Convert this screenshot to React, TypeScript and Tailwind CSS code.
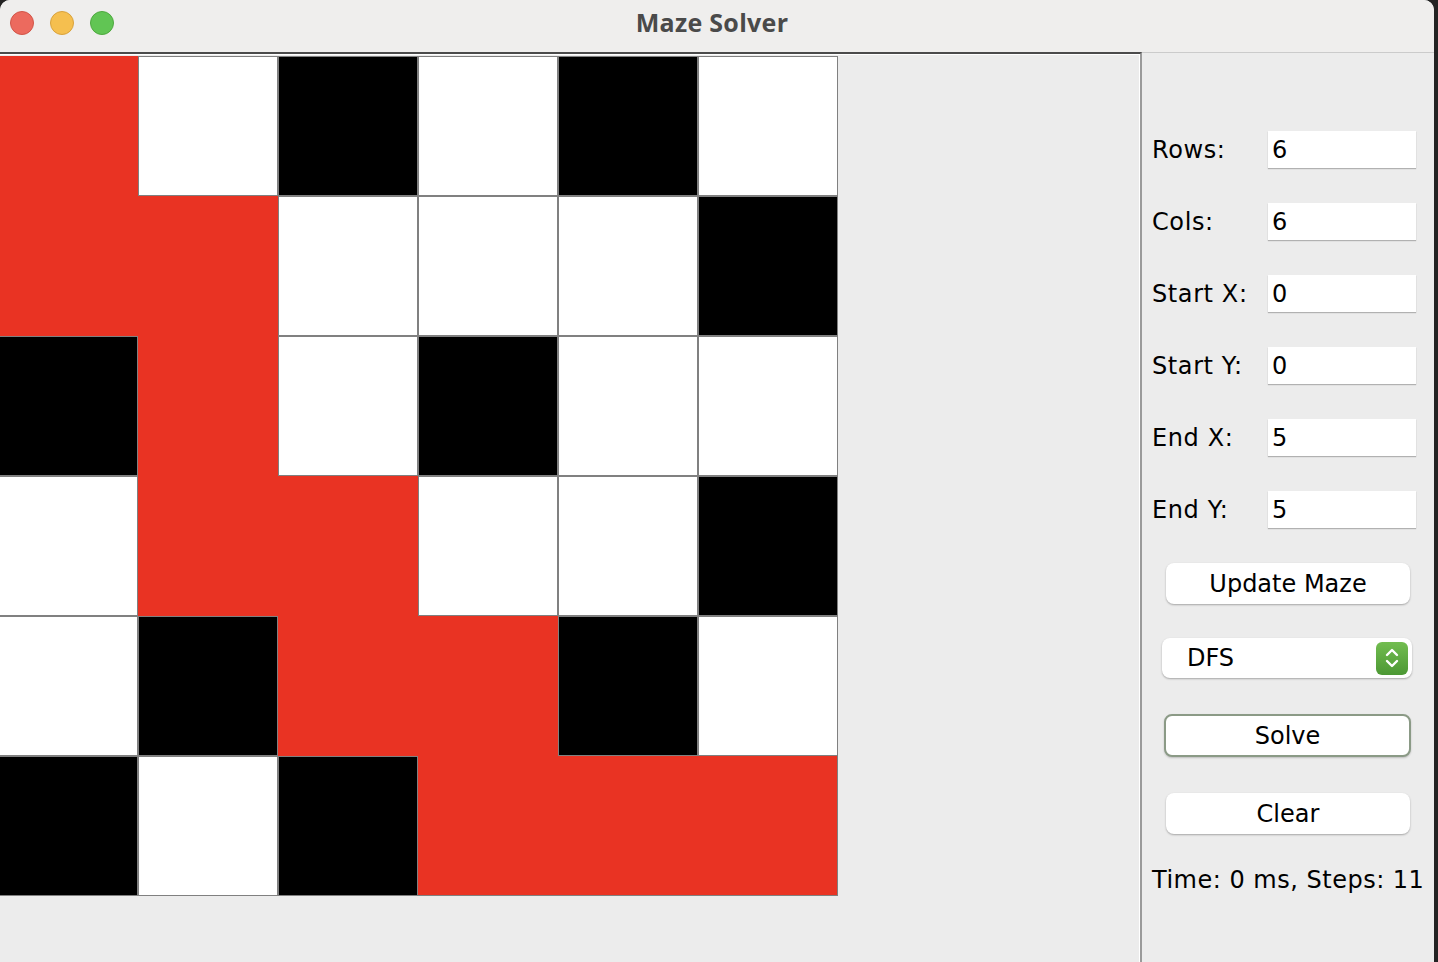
const maze = [
  [2, 0, 1, 0, 1, 0],
  [2, 2, 0, 0, 0, 1],
  [1, 2, 0, 1, 0, 0],
  [0, 2, 2, 0, 0, 1],
  [0, 1, 2, 2, 1, 0],
  [1, 0, 1, 2, 2, 2],
]

const fields = [
  { label: "Rows:", value: "6" },
  { label: "Cols:", value: "6" },
  { label: "Start X:", value: "0" },
  { label: "Start Y:", value: "0" },
  { label: "End X:", value: "5" },
  { label: "End Y:", value: "5" },
]

const uiFont = { fontFamily: '"DejaVu Sans", "Noto Sans", sans-serif' }
const titleFont = { fontFamily: '"Open Sans", "Noto Sans", sans-serif' }

function Cell({ v, r, c }: { v: number; r: number; c: number }) {
  if (v === 2) {
    return (
      <div
        className={
          "h-[140px] w-[140px] bg-[#e93323] border-[#808080] " +
          (c === 5 ? "border-r " : "") +
          (r === 5 ? "border-b" : "")
        }
      />
    )
  }
  return (
    <div
      className={
        v === 1
          ? "h-[140px] w-[140px] bg-black border border-[#808080]"
          : "h-[140px] w-[140px] bg-white border border-[#808080]"
      }
    />
  )
}

export default function App() {
  return (
    <div className="h-[962px] w-[1438px] bg-[#232323] overflow-hidden" style={uiFont}>
      <div className="flex h-full w-[1434px] flex-col overflow-hidden rounded-t-[10px] bg-[#ececec]">
        {/* title bar */}
        <div className="relative flex h-[52px] shrink-0 items-center justify-center bg-[#efeeed] pb-[6px] pr-[10px]">
          <div className="absolute left-[10px] top-[11px] flex gap-[16px]">
            <span className="h-[24px] w-[24px] rounded-full border border-[#d25548] bg-[#ec6a5e]" />
            <span className="h-[24px] w-[24px] rounded-full border border-[#d9a23c] bg-[#f5bf4f]" />
            <span className="h-[24px] w-[24px] rounded-full border border-[#4ea93f] bg-[#61c554]" />
          </div>
          <span className="text-[25px] font-bold text-[#4a4a4a] tracking-[0.3px]" style={titleFont}>
            Maze Solver
          </span>
        </div>

        <div className="flex min-h-0 flex-1">
          {/* maze panel */}
          <div className="w-[1142px] shrink-0 border-t-2 border-r-2 border-t-[#4b4b4b] border-r-[#9a9a9a]">
            <div className="h-full border-t border-r border-white pt-[1px]">
              <div className="-ml-[2px] grid w-[840px] grid-cols-6">
                {maze.map((row, r) =>
                  row.map((v, c) => <Cell key={r + "-" + c} v={v} r={r} c={c} />)
                )}
              </div>
            </div>
          </div>

          {/* controls */}
          <div className="flex flex-1 flex-col border-t border-[#cbcbcb] pl-[10px] pt-[78px] text-black">
            <div className="flex flex-col gap-[35px]">
              {fields.map((f) => (
                <div key={f.label} className="flex h-[37px] items-center">
                  <span className="w-[116px] text-[24px] leading-none tracking-[0.6px]">{f.label}</span>
                  <div className="flex h-[37px] w-[148px] items-center bg-white pl-[4px] text-[24px] shadow-[0_1px_1px_rgba(0,0,0,0.25)]">
                    {f.value}
                  </div>
                </div>
              ))}
            </div>

            <button className="ml-[14px] mt-[35px] h-[41px] w-[244px] rounded-[8px] bg-white text-[24px] shadow-[0_1px_2px_rgba(0,0,0,0.3)]">
              Update Maze
            </button>

            <div className="ml-[10px] mt-[34px] flex h-[40px] w-[250px] items-center justify-between rounded-[8px] bg-white pl-[25px] pr-[4px] shadow-[0_1px_2px_rgba(0,0,0,0.3)]">
              <span className="text-[24px]">DFS</span>
              <span className="flex h-[33px] w-[32px] items-center justify-center rounded-[6px] bg-gradient-to-b from-[#72bd50] to-[#4c9834]">
                <svg width="16" height="24" viewBox="0 0 16 24" fill="none" stroke="white" strokeWidth="2.4" strokeLinecap="round" strokeLinejoin="round">
                  <path d="M3 9 L8 4 L13 9" />
                  <path d="M3 15 L8 20 L13 15" />
                </svg>
              </span>
            </div>

            <button className="ml-[12px] mt-[36px] h-[43px] w-[247px] rounded-[8px] border-2 border-[#8b9a86] bg-white text-[24px] shadow-[0_1px_2px_rgba(0,0,0,0.2)]">
              Solve
            </button>

            <button className="ml-[14px] mt-[36px] h-[41px] w-[244px] rounded-[8px] bg-white text-[24px] shadow-[0_1px_2px_rgba(0,0,0,0.3)]">
              Clear
            </button>

            <div className="mt-[34px] whitespace-nowrap text-[24px] leading-none tracking-[0.5px]">Time: 0 ms, Steps: 11</div>
          </div>
        </div>
      </div>
    </div>
  )
}
